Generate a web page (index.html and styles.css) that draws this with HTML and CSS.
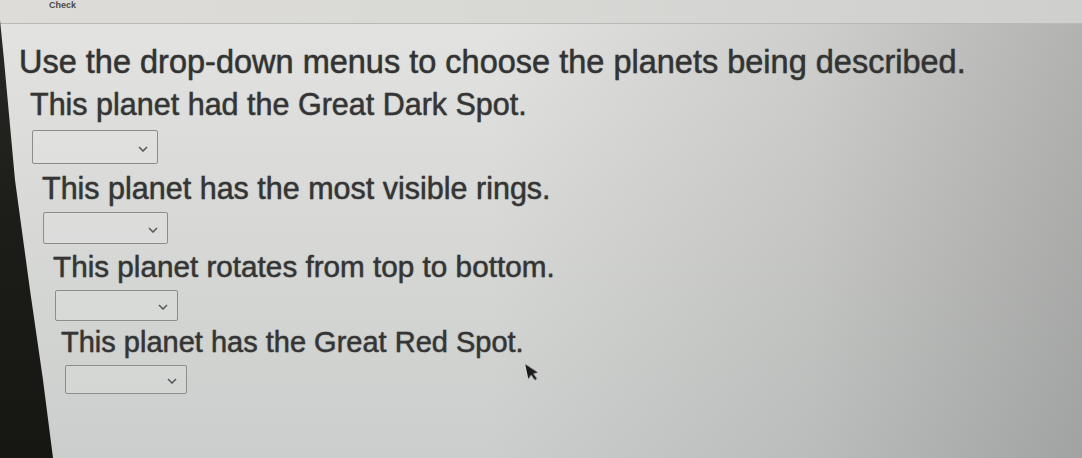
FILE: index.html
```html
<!DOCTYPE html>
<html lang="en">
<head>
<meta charset="utf-8">
<title>Planets</title>
<link rel="stylesheet" href="styles.css">
</head>
<body>
<div class="screen">
  <header class="topbar"><span class="check">Check</span></header>
  <main class="content">
    <h1 class="title">Use the drop-down menus to choose the planets being described.</h1>

    <p class="prompt p1">This planet had the Great Dark Spot.</p>
    <div class="select s1"><svg class="chev" viewBox="0 0 10 6"><polyline points="1,1 5,5 9,1"/></svg></div>

    <p class="prompt p2">This planet has the most visible rings.</p>
    <div class="select s2"><svg class="chev" viewBox="0 0 10 6"><polyline points="1,1 5,5 9,1"/></svg></div>

    <p class="prompt p3">This planet rotates from top to bottom.</p>
    <div class="select s3"><svg class="chev" viewBox="0 0 10 6"><polyline points="1,1 5,5 9,1"/></svg></div>

    <p class="prompt p4">This planet has the Great Red Spot.</p>
    <div class="select s4"><svg class="chev" viewBox="0 0 10 6"><polyline points="1,1 5,5 9,1"/></svg></div>
  </main>
  <div class="bezel"></div>
  <svg class="cursor" viewBox="0 0 12 20"><path d="M1 1 L1 16 L4.6 12.6 L7.2 18.6 L9.4 17.6 L6.8 11.8 L11.6 11.8 Z"/></svg>
</div>
</body>
</html>
```

FILE: styles.css
```css
html, body {
  margin: 0;
  padding: 0;
}
body {
  width: 1082px;
  height: 458px;
  overflow: hidden;
  font-family: "Liberation Sans", Arial, sans-serif;
  color: #3a3a3a;
}
.screen {
  position: relative;
  width: 1082px;
  height: 458px;
  overflow: hidden;
  background:
    linear-gradient(to right, rgba(0,0,0,0) 45%, rgba(60,60,60,0.12) 75%, rgba(40,40,40,0.26) 100%),
    linear-gradient(to bottom, #e4e4e2 0%, #dadbd9 40%, #cbcecc 100%);
}
.topbar {
  height: 23px;
  border-bottom: 1px solid #b9b9b7;
  background: linear-gradient(to right, #dedcd8 0%, #d9d9d6 40%, #cfcfcd 100%);
  padding-left: 49px;
  box-sizing: content-box;
  overflow: hidden;
}
.check {
  display: block;
  margin-top: 0;
  font-size: 9px;
  font-weight: bold;
  color: #4a4a4a;
  line-height: 10px;
}
.content {
  padding-top: 20px;
}
.title {
  margin: 0 0 0 19px;
  font-size: 32.5px;
  line-height: 36px;
  font-weight: normal;
  color: #333;
  -webkit-text-stroke: 0.3px #333;
  text-shadow: 0 0 1.2px rgba(0,0,0,0.45);
  white-space: nowrap;
}
.prompt {
  margin: 0;
  white-space: nowrap;
  color: #353535;
  -webkit-text-stroke: 0.3px #353535;
  text-shadow: 0 0 1.2px rgba(0,0,0,0.45);
}
.p1 { margin: 7px 0 0 30px; font-size: 30.5px; line-height: 34px; }
.p2 { margin: 7px 0 0 42px; font-size: 30.5px; line-height: 34px; }
.p3 { margin: 6px 0 0 53px; font-size: 29.7px; line-height: 33px; }
.p4 { margin: 5px 0 0 61px; font-size: 29px; line-height: 32px; }

.select {
  display: flex;
  align-items: center;
  justify-content: flex-end;
  box-sizing: border-box;
  border: 1.5px solid #8c8c8a;
  border-radius: 2px;
  background: rgba(255,255,255,0.12);
  padding-right: 9px;
}
.s1 { margin: 9px 0 0 32px; width: 126px; height: 34px; }
.s2 { margin: 7px 0 0 43px; width: 125px; height: 32px; }
.s3 { margin: 7px 0 0 55px; width: 123px; height: 31px; }
.s4 { margin: 7px 0 0 65px; width: 122px; height: 29px; }

.chev {
  width: 10px;
  height: 6px;
  fill: none;
  stroke: #5a5a5a;
  stroke-width: 1.6;
  margin-top: 3px;
}
.bezel {
  position: absolute;
  left: 0;
  top: 0;
  width: 60px;
  height: 458px;
  background: linear-gradient(to bottom, #2a2925 0%, #1c1c18 50%, #161612 100%);
  clip-path: polygon(0 20px, 4px 60px, 15px 180px, 30px 290px, 43px 380px, 53px 458px, 0 458px);
}
.cursor {
  position: absolute;
  left: 526px;
  top: 362px;
  width: 12px;
  height: 20px;
  fill: #1a1a1a;
  transform: rotate(-12deg);
  filter: blur(0.4px);
}
```
